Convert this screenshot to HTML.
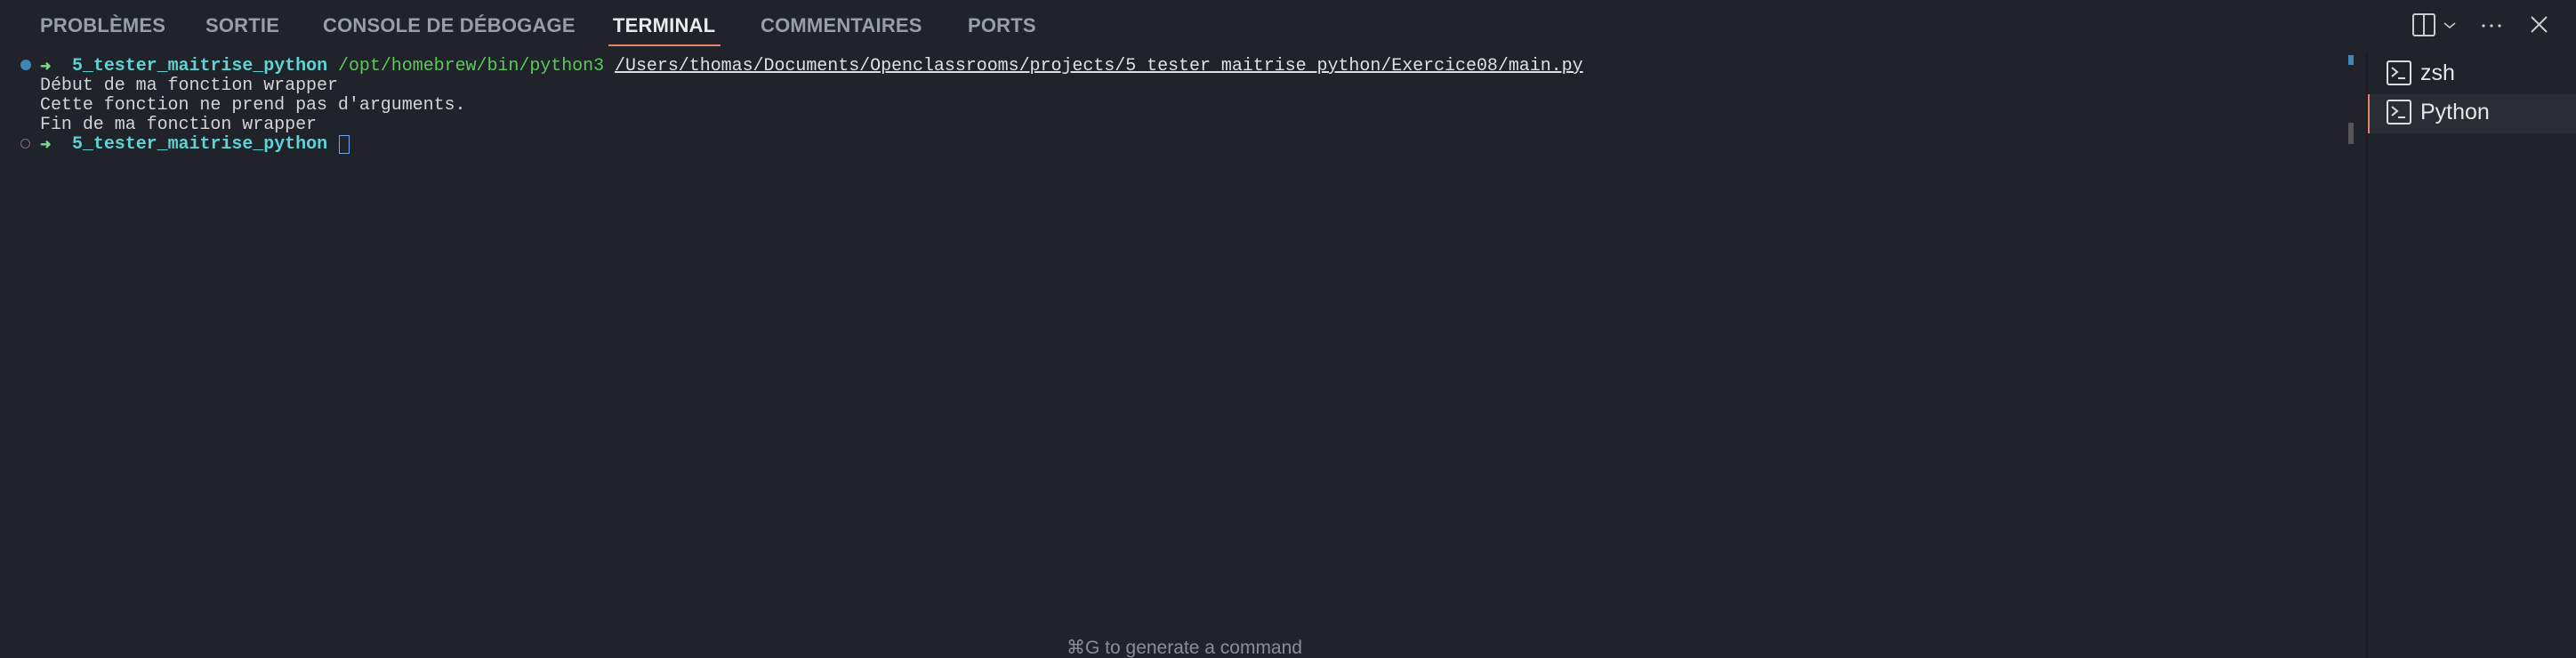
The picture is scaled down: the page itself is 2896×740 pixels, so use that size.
<!DOCTYPE html>
<html><head><meta charset="utf-8"><style>
html,body{margin:0;padding:0;width:2896px;height:740px;background:#202329;overflow:hidden;position:relative}
.t{position:absolute;top:16px;font:bold 22px "Liberation Sans",sans-serif;color:#9a9ea5;letter-spacing:0.2px;white-space:nowrap}
.mono{position:absolute;left:45px;font:20px/22px "Liberation Mono",monospace;color:#d4d4d4;white-space:pre;letter-spacing:-0.04px}
.cy{color:#5fd3d3;font-weight:bold}.gr{color:#5cc85c}.ar{color:#7bd88f;font-weight:bold;font-size:15px;display:inline-block;width:12px}
.u{text-decoration:underline;color:#e0e0e0}
.side{position:absolute;font:25px "Liberation Sans",sans-serif;color:#e6e6e6}
</style></head><body>
<div class="t" style="left:45px">PROBLÈMES</div>
<div class="t" style="left:231px">SORTIE</div>
<div class="t" style="left:363px">CONSOLE DE DÉBOGAGE</div>
<div class="t" style="left:689px;color:#eaeaea">TERMINAL</div>
<div style="position:absolute;left:684px;top:50px;width:126px;height:2px;background:#e8826a"></div>
<div class="t" style="left:855px">COMMENTAIRES</div>
<div class="t" style="left:1088px">PORTS</div>

<div style="position:absolute;left:23px;top:67px;width:12px;height:12px;border-radius:50%;background:#3f86b6"></div>
<div style="position:absolute;left:23px;top:156px;width:9px;height:9px;border-radius:50%;border:1.5px solid #777"></div>
<div class="mono" style="top:64px"><span class="ar">➜</span>  <span class="cy">5_tester_maitrise_python</span> <span class="gr">/opt/homebrew/bin/python3</span> <span class="u">/Users/thomas/Documents/Openclassrooms/projects/5_tester_maitrise_python/Exercice08/main.py</span></div>
<div class="mono" style="top:86px">Début de ma fonction wrapper</div>
<div class="mono" style="top:108px">Cette fonction ne prend pas d'arguments.</div>
<div class="mono" style="top:130px">Fin de ma fonction wrapper</div>
<div class="mono" style="top:152px"><span class="ar">➜</span>  <span class="cy">5_tester_maitrise_python</span> </div>
<div style="position:absolute;left:381px;top:152px;width:10px;height:19px;border:1.5px solid #6fa8ee"></div>

<div style="position:absolute;left:2640px;top:62px;width:6px;height:11px;background:#3f86b6"></div>
<div style="position:absolute;left:2640px;top:138px;width:6px;height:24px;background:#555"></div>
<div style="position:absolute;left:2660px;top:60px;width:2px;height:680px;background:#1b1d22"></div>
<div style="position:absolute;left:2662px;top:106px;width:234px;height:44px;background:#2a2d33"></div>
<div style="position:absolute;left:2662px;top:106px;width:2px;height:44px;background:#e8826a"></div>

<svg style="position:absolute;left:2682px;top:67px" width="32" height="80" viewBox="0 0 32 80" fill="none" stroke="#ddd" stroke-width="2">
<rect x="2" y="2" width="26" height="26" rx="2"/><path d="M7 9l6 5-6 5M14 21h8"/>
<rect x="2" y="46" width="26" height="26" rx="2"/><path d="M7 53l6 5-6 5M14 65h8"/>
</svg>
<div class="side" style="left:2721px;top:68px">zsh</div>
<div class="side" style="left:2721px;top:112px">Python</div>

<svg style="position:absolute;left:2710px;top:13px" width="160" height="30" viewBox="0 0 160 30" fill="none" stroke="#ccc" stroke-width="2">
<rect x="3" y="3" width="24" height="24" rx="2"/><path d="M15 3v24"/>
<path d="M38 13l6 5 6-5" stroke-width="1.5"/>
<circle cx="82" cy="16" r="1.6" fill="#ccc" stroke="none"/><circle cx="91" cy="16" r="1.6" fill="#ccc" stroke="none"/><circle cx="100" cy="16" r="1.6" fill="#ccc" stroke="none"/>
<path d="M136 6l17 17M153 6l-17 17"/>
</svg>

<div style="position:absolute;left:1199px;top:716px;font:21px 'Liberation Sans',sans-serif;color:#8b8e94;white-space:nowrap">⌘G to generate a command</div>
</body></html>
